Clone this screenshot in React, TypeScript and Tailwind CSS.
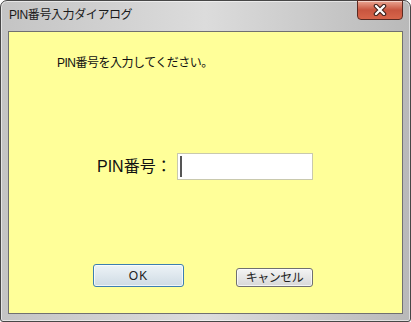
const jp = { fontFamily: '"Liberation Sans", "Noto Sans CJK JP", sans-serif' };

const CloseButton = () => (
  <div className="mt-[-1px] flex h-[20px] w-[46px] items-center justify-center rounded-b-[4px] border border-[#5a2a22] bg-linear-to-b from-[#e9a592] via-[#c8553f] to-[#d7654a] shadow-[inset_0_1px_0_rgba(255,255,255,0.5)]">
    <svg width="14" height="12" viewBox="0 0 14 12">
      <path d="M3 2 L11 10 M11 2 L3 10" stroke="#3a1f1a" strokeWidth="4.5" strokeLinecap="round" />
      <path d="M3 2 L11 10 M11 2 L3 10" stroke="#ffffff" strokeWidth="2.4" strokeLinecap="round" />
    </svg>
  </div>
);

export default function App() {
  return (
    <div className="h-[322px] w-[411px] bg-white" style={jp}>
      <div className="flex h-full w-full flex-col rounded-t-[7px] rounded-b-[3px] border border-[#474747] bg-linear-to-r from-[#c4c4c4] via-[#dcdcdc] to-[#b9b9b9] px-[7px] pb-[7px] shadow-[inset_0_0_0_1px_rgba(255,255,255,0.55)]">
        <div className="flex h-[30px] shrink-0 items-start justify-between">
          <span className="mt-[7px] ml-[1px] text-[12px] leading-[14px] tracking-[-0.4px] text-[#1a1a1a]">
            PIN番号入力ダイアログ
          </span>
          <CloseButton />
        </div>
        <div className="flex flex-1 flex-col border border-[#707070] bg-[#ffff99]">
          <p className="mt-[24px] ml-[48px] text-[12px] leading-[14px] tracking-[-0.5px] text-[#111]">
            PIN番号を入力してください。
          </p>
          <div className="mt-[83px] flex items-center">
            <span className="ml-[88px] w-[80px] text-[16px] leading-[20px] text-[#111]">PIN番号：</span>
            <div className="flex h-[27px] w-[136px] items-center border border-[#c9c9ad] bg-white px-[2px]">
              <div className="h-[21px] w-[2px] bg-[#555]" />
            </div>
          </div>
          <div className="mt-[84px] flex items-start">
            <button className="ml-[84px] flex h-[23px] w-[91px] items-center justify-center rounded-[3px] border border-[#3c7fb1] bg-linear-to-b from-[#edf3f7] to-[#cfdbe4] text-[12px] tracking-[1px] text-[#222] shadow-[inset_0_0_0_1px_rgba(255,255,255,0.7)]">
              OK
            </button>
            <button className="mt-[4px] ml-[52px] flex h-[19px] w-[77px] items-center justify-center rounded-[3px] border border-[#707070] bg-linear-to-b from-[#f4f4f4] to-[#d8d8d8] text-[12px] tracking-[-0.5px] text-[#222] shadow-[inset_0_0_0_1px_rgba(255,255,255,0.7)]">
              キャンセル
            </button>
          </div>
        </div>
      </div>
    </div>
  );
}
